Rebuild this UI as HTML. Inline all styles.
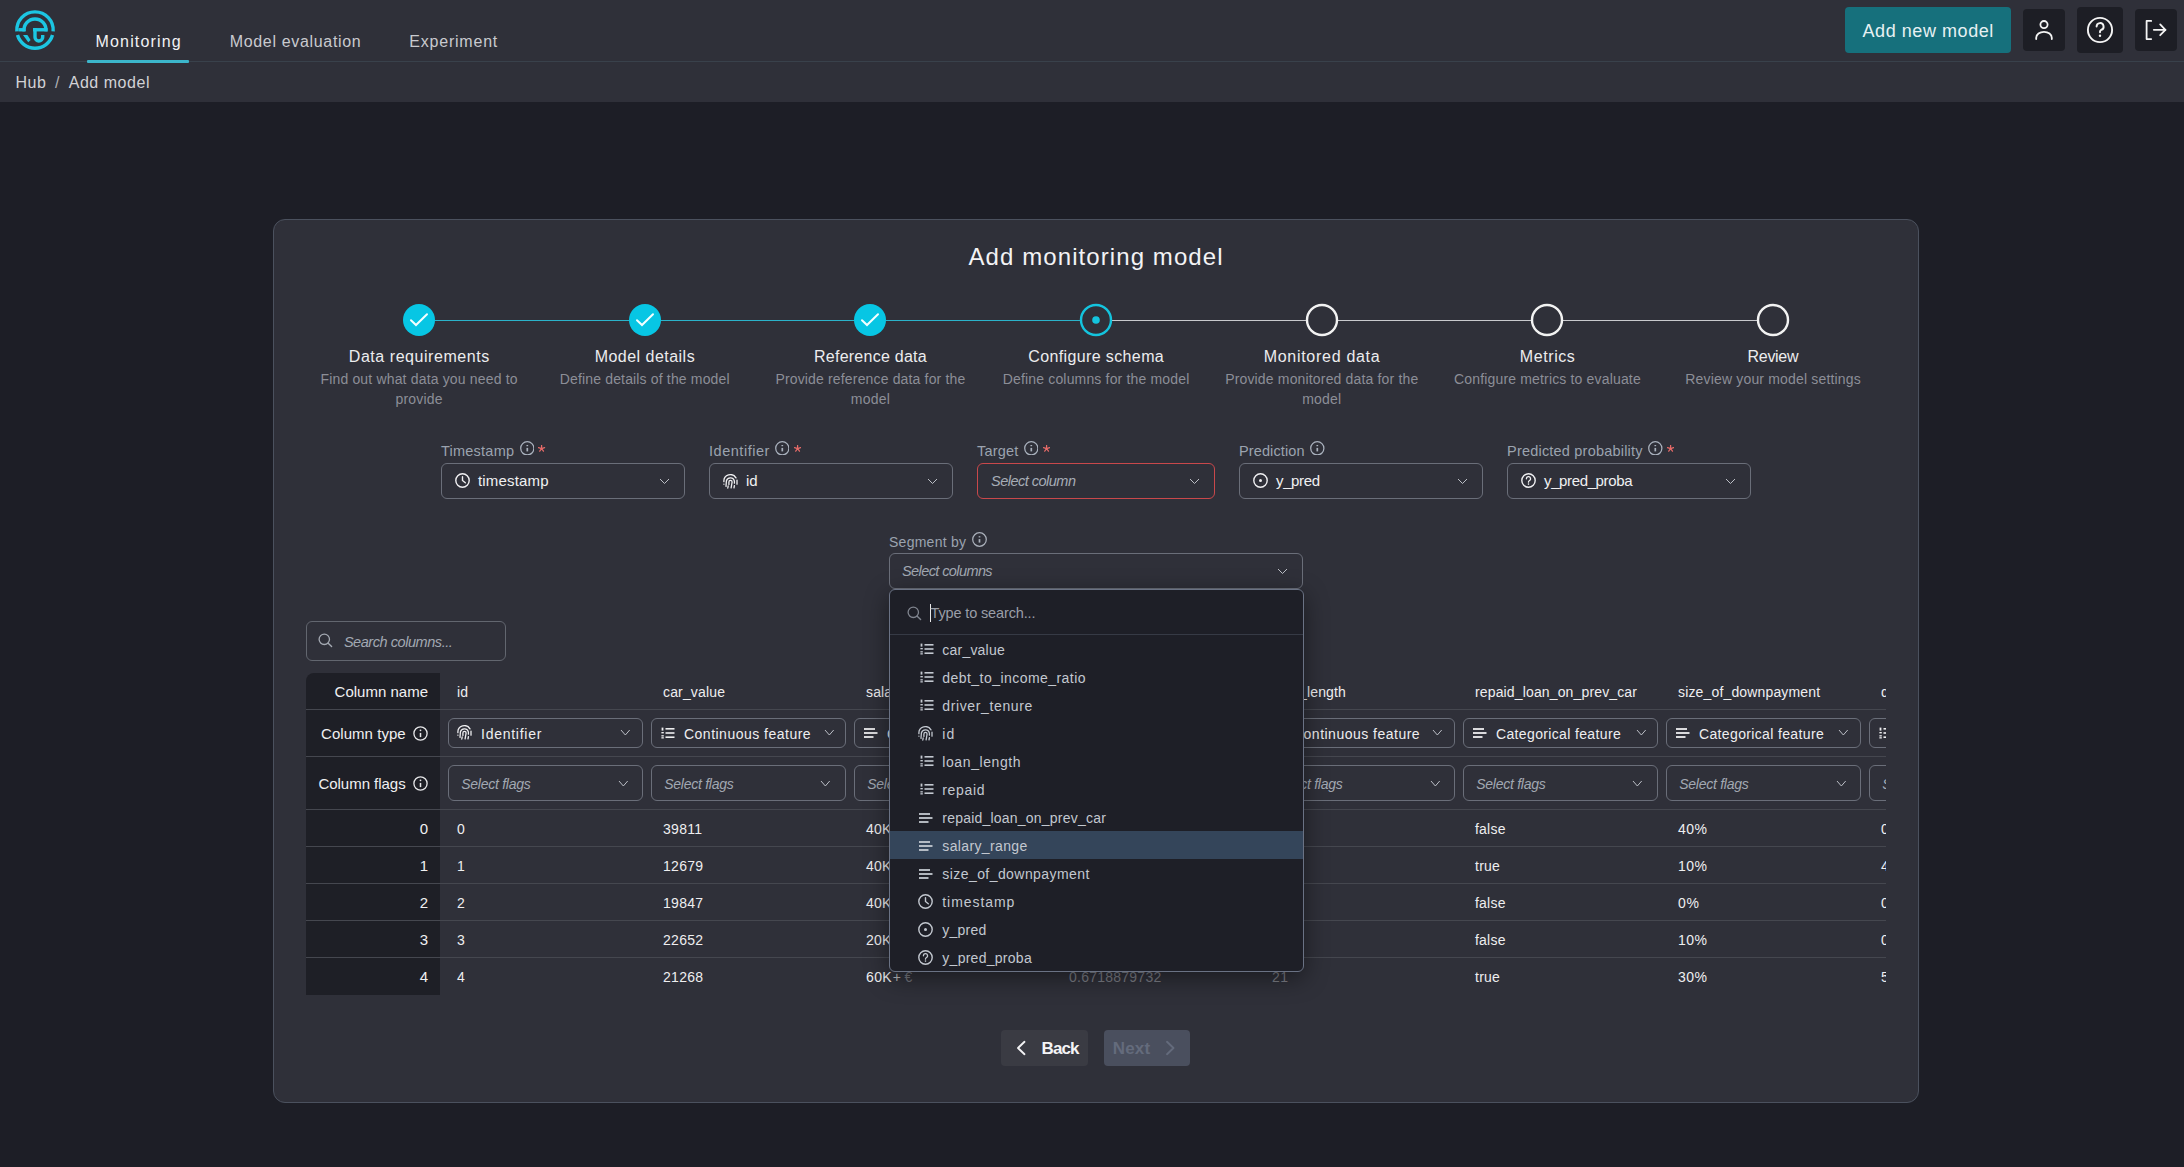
<!DOCTYPE html><html><head><meta charset="utf-8"><style>
html,body{margin:0;padding:0;}
body{width:2184px;height:1167px;overflow:hidden;background:#1d1e26;font-family:"Liberation Sans",sans-serif;position:relative;}
.t{position:absolute;white-space:nowrap;line-height:1;}
.b{position:absolute;box-sizing:border-box;}
</style></head><body>
<div class="b" style="left:0px;top:0px;width:2184px;height:102px;background:#2f3039;"></div>
<div class="b" style="left:0px;top:61px;width:2184px;height:1px;background:#39414b;"></div>
<div class="b" style="left:87px;top:60px;width:102px;height:3px;background:#3cb6cb;border-radius:1px;"></div>
<svg class="b" style="left:0px;top:0px;" width="80" height="60" viewBox="0 0 80 60" fill="none">
<g stroke="#1cc6e2" stroke-width="3.4" fill="none">
<path d="M16.85 31.4 A18.2 18.2 0 1 1 53.15 31.4"/>
<path d="M17.5 35 A18.2 18.2 0 0 0 52.5 35"/>
<path d="M24.09 31.4 A11 11 0 1 1 45.91 31.4"/>
<path d="M18.5 29.75 H25.5"/>
<path d="M33 29.75 H47.5"/>
<path d="M35 28.1 V37.2 A3.85 3.85 0 0 0 42.7 37.2 V35"/>
</g>
<path d="M23 35 L27.4 35 L30.6 40 L28.3 42.2 Z" fill="#1cc6e2"/></svg>
<div class="t" style="left:95.60px;top:34.45px;font-size:16px;color:#f2f2f4;letter-spacing:1.144px;">Monitoring</div>
<div class="t" style="left:229.70px;top:34.45px;font-size:16px;color:#c9cacf;letter-spacing:0.669px;">Model evaluation</div>
<div class="t" style="left:409.30px;top:34.45px;font-size:16px;color:#c9cacf;letter-spacing:0.786px;">Experiment</div>
<div class="b" style="left:1845px;top:7px;width:166px;height:46px;background:#16707c;border-radius:4px;"></div>
<div class="t" style="left:1862.50px;top:21.76px;font-size:18px;color:#e6f1f3;letter-spacing:0.560px;">Add new model</div>
<div class="b" style="left:2023px;top:9px;width:42px;height:42px;background:#1d1e25;border-radius:4px;"></div>
<div class="b" style="left:2077px;top:7px;width:46px;height:46px;background:#1d1e25;border-radius:4px;"></div>
<div class="b" style="left:2135px;top:9px;width:42px;height:42px;background:#1d1e25;border-radius:4px;"></div>
<svg class="b" style="left:2032px;top:18px;" width="24" height="24" viewBox="0 0 24 24" fill="none"><g stroke="#f4f4f4" stroke-width="1.8" stroke-linecap="round"><circle cx="12" cy="6.6" r="3.6"/><path d="M4.2 21 V19.8 A7.8 6 0 0 1 19.8 19.8 V21"/></g></svg>
<svg class="b" style="left:2084px;top:14px;" width="32" height="32" viewBox="0 0 32 32" fill="none"><g stroke="#f4f4f4" stroke-width="1.9" stroke-linecap="round"><circle cx="16" cy="16" r="12.1"/><path d="M12.6 12.6 A3.5 3.5 0 1 1 17.2 15.9 C16.5 16.3 16 16.9 16 17.8 V18.3"/></g><circle cx="16" cy="21.8" r="1.2" fill="#f4f4f4"/></svg>
<svg class="b" style="left:2142px;top:16px;" width="28" height="28" viewBox="0 0 28 28" fill="none"><g stroke="#f4f4f4" stroke-width="1.8" stroke-linecap="round" stroke-linejoin="round"><path d="M9.2 4.9 H4.6 V23.1 H9.2"/><path d="M11.8 13.8 H23.4"/><path d="M18.2 8.4 L23.4 13.8 L18.2 19.2"/></g></svg>
<div class="t" style="left:15.60px;top:75.05px;font-size:16px;color:#d2d2d6;letter-spacing:0.424px;">Hub</div>
<div class="t" style="left:55.00px;top:75.05px;font-size:16px;color:#b0b0b6;">/</div>
<div class="t" style="left:68.70px;top:75.05px;font-size:16px;color:#d2d2d6;letter-spacing:0.538px;">Add model</div>
<div class="b" style="left:273px;top:219px;width:1646px;height:884px;background:#2f3039;border:1px solid #4b515e;border-radius:12px;"></div>
<div class="t" style="left:968.50px;top:245.48px;font-size:24px;color:#f3f3f5;letter-spacing:1.081px;">Add monitoring model</div>
<div class="b" style="left:419px;top:319.5px;width:226px;height:1.5px;background:#2bb3ca;"></div>
<div class="b" style="left:645px;top:319.5px;width:225px;height:1.5px;background:#2bb3ca;"></div>
<div class="b" style="left:870px;top:319.5px;width:226px;height:1.5px;background:#2bb3ca;"></div>
<div class="b" style="left:1096px;top:319.5px;width:226px;height:1.5px;background:#c9c9cd;"></div>
<div class="b" style="left:1322px;top:319.5px;width:225px;height:1.5px;background:#c9c9cd;"></div>
<div class="b" style="left:1547px;top:319.5px;width:226px;height:1.5px;background:#c9c9cd;"></div>
<svg class="b" style="left:402px;top:303px;" width="34" height="34" viewBox="0 0 34 34" fill="none"><circle cx="17" cy="17" r="16" fill="#07c6e4"/><path d="M9 17.2 L14 22 L25 11.2" stroke="#f4ffff" stroke-width="2" fill="none" stroke-linecap="round"/></svg>
<svg class="b" style="left:628px;top:303px;" width="34" height="34" viewBox="0 0 34 34" fill="none"><circle cx="17" cy="17" r="16" fill="#07c6e4"/><path d="M9 17.2 L14 22 L25 11.2" stroke="#f4ffff" stroke-width="2" fill="none" stroke-linecap="round"/></svg>
<svg class="b" style="left:853px;top:303px;" width="34" height="34" viewBox="0 0 34 34" fill="none"><circle cx="17" cy="17" r="16" fill="#07c6e4"/><path d="M9 17.2 L14 22 L25 11.2" stroke="#f4ffff" stroke-width="2" fill="none" stroke-linecap="round"/></svg>
<svg class="b" style="left:1079px;top:303px;" width="34" height="34" viewBox="0 0 34 34" fill="none"><circle cx="17" cy="17" r="15" fill="#2f3039" stroke="#14c4de" stroke-width="2.4"/><circle cx="17" cy="17" r="3.8" fill="#14c4de"/></svg>
<svg class="b" style="left:1305px;top:303px;" width="34" height="34" viewBox="0 0 34 34" fill="none"><circle cx="17" cy="17" r="15" fill="#2f3039" stroke="#f2f2f2" stroke-width="2.4"/></svg>
<svg class="b" style="left:1530px;top:303px;" width="34" height="34" viewBox="0 0 34 34" fill="none"><circle cx="17" cy="17" r="15" fill="#2f3039" stroke="#f2f2f2" stroke-width="2.4"/></svg>
<svg class="b" style="left:1756px;top:303px;" width="34" height="34" viewBox="0 0 34 34" fill="none"><circle cx="17" cy="17" r="15" fill="#2f3039" stroke="#f2f2f2" stroke-width="2.4"/></svg>
<div class="t" style="left:348.80px;top:349.45px;font-size:16px;color:#ececee;letter-spacing:0.549px;">Data requirements</div>
<div class="t" style="left:320.47px;top:372.15px;font-size:14px;color:#8c8e97;letter-spacing:0.166px;">Find out what data you need to</div>
<div class="t" style="left:395.47px;top:392.15px;font-size:14px;color:#8c8e97;letter-spacing:0.191px;">provide</div>
<div class="t" style="left:594.67px;top:349.45px;font-size:16px;color:#ececee;letter-spacing:0.477px;">Model details</div>
<div class="t" style="left:559.72px;top:372.15px;font-size:14px;color:#8c8e97;letter-spacing:0.159px;">Define details of the model</div>
<div class="t" style="left:813.99px;top:349.45px;font-size:16px;color:#ececee;letter-spacing:0.253px;">Reference data</div>
<div class="t" style="left:775.41px;top:372.15px;font-size:14px;color:#8c8e97;letter-spacing:0.160px;">Provide reference data for the</div>
<div class="t" style="left:850.80px;top:392.15px;font-size:14px;color:#8c8e97;letter-spacing:0.238px;">model</div>
<div class="t" style="left:1028.26px;top:349.45px;font-size:16px;color:#ececee;letter-spacing:0.377px;">Configure schema</div>
<div class="t" style="left:1002.69px;top:372.15px;font-size:14px;color:#8c8e97;letter-spacing:0.169px;">Define columns for the model</div>
<div class="t" style="left:1263.68px;top:349.45px;font-size:16px;color:#ececee;letter-spacing:0.713px;">Monitored data</div>
<div class="t" style="left:1225.16px;top:372.15px;font-size:14px;color:#8c8e97;letter-spacing:0.162px;">Provide monitored data for the</div>
<div class="t" style="left:1302.14px;top:392.15px;font-size:14px;color:#8c8e97;letter-spacing:0.238px;">model</div>
<div class="t" style="left:1519.85px;top:349.45px;font-size:16px;color:#ececee;letter-spacing:0.574px;">Metrics</div>
<div class="t" style="left:1454.03px;top:372.15px;font-size:14px;color:#8c8e97;letter-spacing:0.163px;">Configure metrics to evaluate</div>
<div class="t" style="left:1747.52px;top:349.45px;font-size:16px;color:#ececee;letter-spacing:-0.292px;">Review</div>
<div class="t" style="left:1685.29px;top:372.15px;font-size:14px;color:#8c8e97;letter-spacing:0.171px;">Review your model settings</div>
<div class="t" style="left:441.00px;top:443.52px;font-size:14.5px;color:#9ba3af;letter-spacing:0.229px;">Timestamp</div>
<svg class="b" style="left:519.5px;top:440.6px;" width="14.6" height="14.6" viewBox="0 0 14.6 14.6" fill="none"><circle cx="7.3" cy="7.3" r="6.6" stroke="#aab2be" stroke-width="1.25"/><path d="M7.3 6.8999999999999995 V10.4" stroke="#aab2be" stroke-width="1.7"/><path d="M7.3 5.199999999999999 V4.0" stroke="#aab2be" stroke-width="1.7"/></svg>
<svg class="b" style="left:538.4px;top:445.1px;" width="7.2" height="7.2" viewBox="0 0 7.2 7.2" fill="none"><path d="M3.6 3.6 L3.60 0.40 M3.6 3.6 L6.64 2.61 M3.6 3.6 L5.48 6.19 M3.6 3.6 L1.72 6.19 M3.6 3.6 L0.56 2.61 " stroke="#e56a68" stroke-width="1.25" stroke-linecap="round"/></svg>
<div class="b" style="left:441px;top:463px;width:244px;height:36px;border:1px solid #6a6e79;border-radius:6px;"></div>
<svg class="b" style="left:455px;top:473px;" width="15" height="15" viewBox="0 0 15 15" fill="none"><circle cx="7.5" cy="7.5" r="6.7" stroke="#f0f0f2" stroke-width="1.4"/><path d="M7.5 3.7 V7.5 L10.3 9.7" stroke="#f0f0f2" stroke-width="1.4" stroke-linecap="round" fill="none"/></svg>
<div class="t" style="left:478.00px;top:473.30px;font-size:15px;color:#f0f0f2;letter-spacing:0.177px;">timestamp</div>
<svg class="b" style="left:659px;top:478px;" width="11" height="6.5" viewBox="0 0 11 6.5" fill="none"><path d="M1 1 L5.5 5.5 L10 1" stroke="#c4c7ce" stroke-width="0.95" fill="none"/></svg>
<div class="t" style="left:709.00px;top:443.52px;font-size:14.5px;color:#9ba3af;letter-spacing:0.532px;">Identifier</div>
<svg class="b" style="left:774.9px;top:440.6px;" width="14.6" height="14.6" viewBox="0 0 14.6 14.6" fill="none"><circle cx="7.3" cy="7.3" r="6.6" stroke="#aab2be" stroke-width="1.25"/><path d="M7.3 6.8999999999999995 V10.4" stroke="#aab2be" stroke-width="1.7"/><path d="M7.3 5.199999999999999 V4.0" stroke="#aab2be" stroke-width="1.7"/></svg>
<svg class="b" style="left:793.8px;top:445.1px;" width="7.2" height="7.2" viewBox="0 0 7.2 7.2" fill="none"><path d="M3.6 3.6 L3.60 0.40 M3.6 3.6 L6.64 2.61 M3.6 3.6 L5.48 6.19 M3.6 3.6 L1.72 6.19 M3.6 3.6 L0.56 2.61 " stroke="#e56a68" stroke-width="1.25" stroke-linecap="round"/></svg>
<div class="b" style="left:709px;top:463px;width:244px;height:36px;border:1px solid #6a6e79;border-radius:6px;"></div>
<svg class="b" style="left:722.5px;top:473.5px;" width="15" height="15" viewBox="0 0 15 15" fill="none"><g stroke="#f0f0f2" stroke-width="1.3" fill="none" stroke-linecap="round">
<path d="M0.9 7.6 A6.5 6.5 0 0 1 13 3.9"/><path d="M0.9 10.1 V10.2"/><path d="M14 6.1 V10.2"/>
<path d="M3 12.4 L3.4 6.9 A4.1 4.1 0 0 1 11.4 7.2 V9.2"/><path d="M5.9 10.4 V8 A1.6 1.6 0 0 1 9.1 8 L8.1 13.9"/>
<path d="M5.2 11.8 L4.8 14"/><path d="M11.4 11.7 L11 13.9"/></g></svg>
<div class="t" style="left:746.00px;top:473.30px;font-size:15px;color:#f0f0f2;letter-spacing:-0.175px;">id</div>
<svg class="b" style="left:927px;top:478px;" width="11" height="6.5" viewBox="0 0 11 6.5" fill="none"><path d="M1 1 L5.5 5.5 L10 1" stroke="#c4c7ce" stroke-width="0.95" fill="none"/></svg>
<div class="t" style="left:977.00px;top:443.52px;font-size:14.5px;color:#9ba3af;letter-spacing:0.200px;">Target</div>
<svg class="b" style="left:1023.8px;top:440.6px;" width="14.6" height="14.6" viewBox="0 0 14.6 14.6" fill="none"><circle cx="7.3" cy="7.3" r="6.6" stroke="#aab2be" stroke-width="1.25"/><path d="M7.3 6.8999999999999995 V10.4" stroke="#aab2be" stroke-width="1.7"/><path d="M7.3 5.199999999999999 V4.0" stroke="#aab2be" stroke-width="1.7"/></svg>
<svg class="b" style="left:1042.7px;top:445.1px;" width="7.2" height="7.2" viewBox="0 0 7.2 7.2" fill="none"><path d="M3.6 3.6 L3.60 0.40 M3.6 3.6 L6.64 2.61 M3.6 3.6 L5.48 6.19 M3.6 3.6 L1.72 6.19 M3.6 3.6 L0.56 2.61 " stroke="#e56a68" stroke-width="1.25" stroke-linecap="round"/></svg>
<div class="b" style="left:977px;top:463px;width:238px;height:36px;border:1px solid #c9484b;border-radius:6px;"></div>
<div class="t" style="left:991.00px;top:474.02px;font-size:14.5px;color:#a6acb6;letter-spacing:-0.506px;font-style:italic;">Select column</div>
<svg class="b" style="left:1189px;top:478px;" width="11" height="6.5" viewBox="0 0 11 6.5" fill="none"><path d="M1 1 L5.5 5.5 L10 1" stroke="#c4c7ce" stroke-width="0.95" fill="none"/></svg>
<div class="t" style="left:1239.00px;top:443.52px;font-size:14.5px;color:#9ba3af;letter-spacing:0.114px;">Prediction</div>
<svg class="b" style="left:1310.0px;top:440.6px;" width="14.6" height="14.6" viewBox="0 0 14.6 14.6" fill="none"><circle cx="7.3" cy="7.3" r="6.6" stroke="#aab2be" stroke-width="1.25"/><path d="M7.3 6.8999999999999995 V10.4" stroke="#aab2be" stroke-width="1.7"/><path d="M7.3 5.199999999999999 V4.0" stroke="#aab2be" stroke-width="1.7"/></svg>
<div class="b" style="left:1239px;top:463px;width:244px;height:36px;border:1px solid #6a6e79;border-radius:6px;"></div>
<svg class="b" style="left:1253px;top:473px;" width="15" height="15" viewBox="0 0 15 15" fill="none"><circle cx="7.5" cy="7.5" r="6.7" stroke="#f0f0f2" stroke-width="1.4"/><circle cx="7.5" cy="7.5" r="1.5" fill="#f0f0f2"/></svg>
<div class="t" style="left:1276.00px;top:473.30px;font-size:15px;color:#f0f0f2;letter-spacing:-0.373px;">y_pred</div>
<svg class="b" style="left:1457px;top:478px;" width="11" height="6.5" viewBox="0 0 11 6.5" fill="none"><path d="M1 1 L5.5 5.5 L10 1" stroke="#c4c7ce" stroke-width="0.95" fill="none"/></svg>
<div class="t" style="left:1507.00px;top:443.52px;font-size:14.5px;color:#9ba3af;letter-spacing:0.206px;">Predicted probability</div>
<svg class="b" style="left:1648.0px;top:440.6px;" width="14.6" height="14.6" viewBox="0 0 14.6 14.6" fill="none"><circle cx="7.3" cy="7.3" r="6.6" stroke="#aab2be" stroke-width="1.25"/><path d="M7.3 6.8999999999999995 V10.4" stroke="#aab2be" stroke-width="1.7"/><path d="M7.3 5.199999999999999 V4.0" stroke="#aab2be" stroke-width="1.7"/></svg>
<svg class="b" style="left:1666.9px;top:445.1px;" width="7.2" height="7.2" viewBox="0 0 7.2 7.2" fill="none"><path d="M3.6 3.6 L3.60 0.40 M3.6 3.6 L6.64 2.61 M3.6 3.6 L5.48 6.19 M3.6 3.6 L1.72 6.19 M3.6 3.6 L0.56 2.61 " stroke="#e56a68" stroke-width="1.25" stroke-linecap="round"/></svg>
<div class="b" style="left:1507px;top:463px;width:244px;height:36px;border:1px solid #6a6e79;border-radius:6px;"></div>
<svg class="b" style="left:1521px;top:473px;" width="15" height="15" viewBox="0 0 15 15" fill="none"><circle cx="7.5" cy="7.5" r="6.7" stroke="#f0f0f2" stroke-width="1.4"/><path d="M5.4 5.8 A2.1 2.1 0 1 1 8.3 7.7 C7.8 8 7.5 8.3 7.5 8.9 V9.2" stroke="#f0f0f2" stroke-width="1.3" fill="none" stroke-linecap="round"/><circle cx="7.5" cy="11.1" r="0.8" fill="#f0f0f2"/></svg>
<div class="t" style="left:1544.00px;top:473.30px;font-size:15px;color:#f0f0f2;letter-spacing:-0.370px;">y_pred_proba</div>
<svg class="b" style="left:1725px;top:478px;" width="11" height="6.5" viewBox="0 0 11 6.5" fill="none"><path d="M1 1 L5.5 5.5 L10 1" stroke="#c4c7ce" stroke-width="0.95" fill="none"/></svg>
<div class="b" style="left:306px;top:621px;width:200px;height:40px;border:1px solid #62666f;border-radius:6px;"></div>
<svg class="b" style="left:318px;top:633px;" width="16" height="16" viewBox="0 0 16 16" fill="none"><circle cx="6.3" cy="6.3" r="5.2" stroke="#a4a9b2" stroke-width="1.3"/><path d="M10.2 10.2 L13.6 13.6" stroke="#a4a9b2" stroke-width="1.4" stroke-linecap="round"/></svg>
<div class="t" style="left:343.90px;top:635.02px;font-size:14.5px;color:#a2a8b2;letter-spacing:-0.441px;font-style:italic;">Search columns...</div>
<div class="b" style="left:306px;top:673px;width:1580px;height:322px;overflow:hidden;">
<div class="b" style="left:0px;top:0px;width:134px;height:322px;background:#1e1f26;border-top-left-radius:8px;"></div>
<div class="b" style="left:0px;top:36px;width:1580px;height:1px;background:#45474f;"></div>
<div class="b" style="left:0px;top:83px;width:1580px;height:1px;background:#45474f;"></div>
<div class="b" style="left:0px;top:136px;width:1580px;height:1px;background:#45474f;"></div>
<div class="b" style="left:0px;top:173px;width:1580px;height:1px;background:#45474f;"></div>
<div class="b" style="left:0px;top:210px;width:1580px;height:1px;background:#45474f;"></div>
<div class="b" style="left:0px;top:247px;width:1580px;height:1px;background:#45474f;"></div>
<div class="b" style="left:0px;top:284px;width:1580px;height:1px;background:#45474f;"></div>
<div class="t" style="left:28.60px;top:10.70px;font-size:15px;color:#f0f0f2;letter-spacing:0.002px;">Column name</div>
<div class="t" style="left:15.00px;top:53.30px;font-size:15px;color:#f0f0f2;letter-spacing:0.049px;">Column type</div>
<div class="t" style="left:12.40px;top:102.50px;font-size:15px;color:#f0f0f2;letter-spacing:-0.022px;">Column flags</div>
<div class="t" style="left:113.66px;top:148.30px;font-size:15px;color:#f0f0f2;">0</div>
<div class="t" style="left:113.66px;top:185.30px;font-size:15px;color:#f0f0f2;">1</div>
<div class="t" style="left:113.66px;top:222.30px;font-size:15px;color:#f0f0f2;">2</div>
<div class="t" style="left:113.66px;top:259.30px;font-size:15px;color:#f0f0f2;">3</div>
<div class="t" style="left:113.66px;top:296.30px;font-size:15px;color:#f0f0f2;">4</div>
<svg class="b" style="left:107px;top:53px;" width="15" height="15" viewBox="0 0 15 15" fill="none"><circle cx="7.5" cy="7.5" r="6.6" stroke="#e8e8ea" stroke-width="1.3"/><path d="M7.5 6.9 V11.1" stroke="#e8e8ea" stroke-width="1.5"/><circle cx="7.5" cy="4.3" r="0.9" fill="#e8e8ea"/></svg>
<svg class="b" style="left:107px;top:103px;" width="15" height="15" viewBox="0 0 15 15" fill="none"><circle cx="7.5" cy="7.5" r="6.6" stroke="#e8e8ea" stroke-width="1.3"/><path d="M7.5 6.9 V11.1" stroke="#e8e8ea" stroke-width="1.5"/><circle cx="7.5" cy="4.3" r="0.9" fill="#e8e8ea"/></svg>
<div class="t" style="left:151.00px;top:11.75px;font-size:14px;color:#eeeef0;letter-spacing:0.218px;">id</div>
<div class="b" style="left:142px;top:45px;width:194.5px;height:30px;border:1px solid #6a6e79;border-radius:6px;"></div>
<svg class="b" style="left:151px;top:52px;" width="15" height="15" viewBox="0 0 15 15" fill="none"><g stroke="#eeeef0" stroke-width="1.3" fill="none" stroke-linecap="round">
<path d="M0.9 7.6 A6.5 6.5 0 0 1 13 3.9"/><path d="M0.9 10.1 V10.2"/><path d="M14 6.1 V10.2"/>
<path d="M3 12.4 L3.4 6.9 A4.1 4.1 0 0 1 11.4 7.2 V9.2"/><path d="M5.9 10.4 V8 A1.6 1.6 0 0 1 9.1 8 L8.1 13.9"/>
<path d="M5.2 11.8 L4.8 14"/><path d="M11.4 11.7 L11 13.9"/></g></svg>
<div class="t" style="left:175.00px;top:53.85px;font-size:14px;color:#eeeef0;letter-spacing:0.745px;">Identifier</div>
<svg class="b" style="left:314px;top:56px;" width="10.7" height="7" viewBox="0 0 10.7 7" fill="none"><path d="M1 1 L5.35 6 L9.7 1" stroke="#c4c7ce" stroke-width="0.95" fill="none"/></svg>
<div class="b" style="left:142px;top:92px;width:194.5px;height:36px;border:1px solid #6a6e79;border-radius:6px;"></div>
<div class="t" style="left:155.20px;top:104.15px;font-size:14px;color:#a2a8b2;letter-spacing:-0.261px;font-style:italic;">Select flags</div>
<svg class="b" style="left:312px;top:107px;" width="10.7" height="7" viewBox="0 0 10.7 7" fill="none"><path d="M1 1 L5.35 6 L9.7 1" stroke="#c4c7ce" stroke-width="0.95" fill="none"/></svg>
<div class="t" style="left:151.00px;top:149.15px;font-size:14px;color:#eeeef0;">0</div>
<div class="t" style="left:151.00px;top:186.15px;font-size:14px;color:#eeeef0;">1</div>
<div class="t" style="left:151.00px;top:223.15px;font-size:14px;color:#eeeef0;">2</div>
<div class="t" style="left:151.00px;top:260.15px;font-size:14px;color:#eeeef0;">3</div>
<div class="t" style="left:151.00px;top:297.15px;font-size:14px;color:#eeeef0;">4</div>
<div class="t" style="left:357.00px;top:11.75px;font-size:14px;color:#eeeef0;letter-spacing:0.152px;">car_value</div>
<div class="b" style="left:345px;top:45px;width:194.5px;height:30px;border:1px solid #6a6e79;border-radius:6px;"></div>
<svg class="b" style="left:355px;top:54px;" width="14" height="12" viewBox="0 0 14 12" fill="none"><g fill="#eeeef0"><rect x="4.5" y="1" width="9" height="1.6"/><rect x="4.5" y="5.2" width="9" height="1.6"/><rect x="4.5" y="9.4" width="9" height="1.6"/><rect x="0.6" y="0.6" width="1.8" height="3"/><rect x="0.4" y="5" width="2.4" height="1.4"/><rect x="0.4" y="8.2" width="2.4" height="1.3"/><rect x="0.4" y="10.2" width="2.4" height="1.3"/></g></svg>
<div class="t" style="left:378.00px;top:53.85px;font-size:14px;color:#eeeef0;letter-spacing:0.488px;">Continuous feature</div>
<svg class="b" style="left:518px;top:56px;" width="10.7" height="7" viewBox="0 0 10.7 7" fill="none"><path d="M1 1 L5.35 6 L9.7 1" stroke="#c4c7ce" stroke-width="0.95" fill="none"/></svg>
<div class="b" style="left:345px;top:92px;width:194.5px;height:36px;border:1px solid #6a6e79;border-radius:6px;"></div>
<div class="t" style="left:358.20px;top:104.15px;font-size:14px;color:#a2a8b2;letter-spacing:-0.261px;font-style:italic;">Select flags</div>
<svg class="b" style="left:514px;top:107px;" width="10.7" height="7" viewBox="0 0 10.7 7" fill="none"><path d="M1 1 L5.35 6 L9.7 1" stroke="#c4c7ce" stroke-width="0.95" fill="none"/></svg>
<div class="t" style="left:357.00px;top:149.15px;font-size:14px;color:#eeeef0;letter-spacing:0.284px;">39811</div>
<div class="t" style="left:357.00px;top:186.15px;font-size:14px;color:#eeeef0;letter-spacing:0.292px;">12679</div>
<div class="t" style="left:357.00px;top:223.15px;font-size:14px;color:#eeeef0;letter-spacing:0.292px;">19847</div>
<div class="t" style="left:357.00px;top:260.15px;font-size:14px;color:#eeeef0;letter-spacing:0.292px;">22652</div>
<div class="t" style="left:357.00px;top:297.15px;font-size:14px;color:#eeeef0;letter-spacing:0.292px;">21268</div>
<div class="t" style="left:560.00px;top:11.75px;font-size:14px;color:#eeeef0;letter-spacing:0.147px;">salary_range</div>
<div class="b" style="left:548px;top:45px;width:194.5px;height:30px;border:1px solid #6a6e79;border-radius:6px;"></div>
<svg class="b" style="left:557px;top:54px;" width="15" height="12" viewBox="0 0 15 12" fill="none"><g fill="#eeeef0"><rect x="1" y="1.1" width="11" height="1.8"/><rect x="1" y="5.1" width="13.5" height="1.8"/><rect x="1" y="9.1" width="9.5" height="1.8"/></g></svg>
<div class="t" style="left:581.00px;top:53.85px;font-size:14px;color:#eeeef0;letter-spacing:0.356px;">Categorical feature</div>
<svg class="b" style="left:720px;top:56px;" width="10.7" height="7" viewBox="0 0 10.7 7" fill="none"><path d="M1 1 L5.35 6 L9.7 1" stroke="#c4c7ce" stroke-width="0.95" fill="none"/></svg>
<div class="b" style="left:548px;top:92px;width:194.5px;height:36px;border:1px solid #6a6e79;border-radius:6px;"></div>
<div class="t" style="left:561.20px;top:104.15px;font-size:14px;color:#a2a8b2;letter-spacing:-0.261px;font-style:italic;">Select flags</div>
<svg class="b" style="left:718px;top:107px;" width="10.7" height="7" viewBox="0 0 10.7 7" fill="none"><path d="M1 1 L5.35 6 L9.7 1" stroke="#c4c7ce" stroke-width="0.95" fill="none"/></svg>
<div class="t" style="left:560.00px;top:149.15px;font-size:14px;color:#eeeef0;letter-spacing:0.222px;">40K - 60K €</div>
<div class="t" style="left:560.00px;top:186.15px;font-size:14px;color:#eeeef0;letter-spacing:0.222px;">40K - 60K €</div>
<div class="t" style="left:560.00px;top:223.15px;font-size:14px;color:#eeeef0;letter-spacing:0.222px;">40K - 60K €</div>
<div class="t" style="left:560.00px;top:260.15px;font-size:14px;color:#eeeef0;letter-spacing:0.222px;">20K - 40K €</div>
<div class="t" style="left:560.00px;top:297.15px;font-size:14px;color:#eeeef0;letter-spacing:0.374px;">60K</div>
<div class="t" style="left:586.66px;top:297.15px;font-size:14px;color:#b8b9be;">+</div>
<div class="t" style="left:598.58px;top:297.15px;font-size:14px;color:#75777e;">€</div>
<div class="t" style="left:763.00px;top:11.75px;font-size:14px;color:#eeeef0;letter-spacing:0.142px;">debt_to_income_ratio</div>
<div class="b" style="left:751px;top:45px;width:194.5px;height:30px;border:1px solid #6a6e79;border-radius:6px;"></div>
<svg class="b" style="left:761px;top:54px;" width="14" height="12" viewBox="0 0 14 12" fill="none"><g fill="#eeeef0"><rect x="4.5" y="1" width="9" height="1.6"/><rect x="4.5" y="5.2" width="9" height="1.6"/><rect x="4.5" y="9.4" width="9" height="1.6"/><rect x="0.6" y="0.6" width="1.8" height="3"/><rect x="0.4" y="5" width="2.4" height="1.4"/><rect x="0.4" y="8.2" width="2.4" height="1.3"/><rect x="0.4" y="10.2" width="2.4" height="1.3"/></g></svg>
<div class="t" style="left:784.00px;top:53.85px;font-size:14px;color:#eeeef0;letter-spacing:0.488px;">Continuous feature</div>
<svg class="b" style="left:924px;top:56px;" width="10.7" height="7" viewBox="0 0 10.7 7" fill="none"><path d="M1 1 L5.35 6 L9.7 1" stroke="#c4c7ce" stroke-width="0.95" fill="none"/></svg>
<div class="b" style="left:751px;top:92px;width:194.5px;height:36px;border:1px solid #6a6e79;border-radius:6px;"></div>
<div class="t" style="left:764.20px;top:104.15px;font-size:14px;color:#a2a8b2;letter-spacing:-0.261px;font-style:italic;">Select flags</div>
<svg class="b" style="left:920px;top:107px;" width="10.7" height="7" viewBox="0 0 10.7 7" fill="none"><path d="M1 1 L5.35 6 L9.7 1" stroke="#c4c7ce" stroke-width="0.95" fill="none"/></svg>
<div class="t" style="left:763.00px;top:149.15px;font-size:14px;color:#eeeef0;letter-spacing:0.244px;">0.5471638122</div>
<div class="t" style="left:763.00px;top:186.15px;font-size:14px;color:#eeeef0;letter-spacing:0.244px;">0.2846275529</div>
<div class="t" style="left:763.00px;top:223.15px;font-size:14px;color:#eeeef0;letter-spacing:0.244px;">0.3308742918</div>
<div class="t" style="left:763.00px;top:260.15px;font-size:14px;color:#eeeef0;letter-spacing:0.244px;">0.4562981742</div>
<div class="t" style="left:763.00px;top:297.15px;font-size:14px;color:#7c7e86;letter-spacing:0.244px;">0.6718879732</div>
<div class="t" style="left:966.00px;top:11.75px;font-size:14px;color:#eeeef0;letter-spacing:0.145px;">loan_length</div>
<div class="b" style="left:954px;top:45px;width:194.5px;height:30px;border:1px solid #6a6e79;border-radius:6px;"></div>
<svg class="b" style="left:964px;top:54px;" width="14" height="12" viewBox="0 0 14 12" fill="none"><g fill="#eeeef0"><rect x="4.5" y="1" width="9" height="1.6"/><rect x="4.5" y="5.2" width="9" height="1.6"/><rect x="4.5" y="9.4" width="9" height="1.6"/><rect x="0.6" y="0.6" width="1.8" height="3"/><rect x="0.4" y="5" width="2.4" height="1.4"/><rect x="0.4" y="8.2" width="2.4" height="1.3"/><rect x="0.4" y="10.2" width="2.4" height="1.3"/></g></svg>
<div class="t" style="left:987.00px;top:53.85px;font-size:14px;color:#eeeef0;letter-spacing:0.488px;">Continuous feature</div>
<svg class="b" style="left:1126px;top:56px;" width="10.7" height="7" viewBox="0 0 10.7 7" fill="none"><path d="M1 1 L5.35 6 L9.7 1" stroke="#c4c7ce" stroke-width="0.95" fill="none"/></svg>
<div class="b" style="left:954px;top:92px;width:194.5px;height:36px;border:1px solid #6a6e79;border-radius:6px;"></div>
<div class="t" style="left:967.20px;top:104.15px;font-size:14px;color:#a2a8b2;letter-spacing:-0.261px;font-style:italic;">Select flags</div>
<svg class="b" style="left:1124px;top:107px;" width="10.7" height="7" viewBox="0 0 10.7 7" fill="none"><path d="M1 1 L5.35 6 L9.7 1" stroke="#c4c7ce" stroke-width="0.95" fill="none"/></svg>
<div class="t" style="left:966.00px;top:149.15px;font-size:14px;color:#eeeef0;letter-spacing:0.467px;">24</div>
<div class="t" style="left:966.00px;top:186.15px;font-size:14px;color:#eeeef0;letter-spacing:0.467px;">36</div>
<div class="t" style="left:966.00px;top:223.15px;font-size:14px;color:#eeeef0;letter-spacing:0.467px;">48</div>
<div class="t" style="left:966.00px;top:260.15px;font-size:14px;color:#eeeef0;letter-spacing:0.467px;">60</div>
<div class="t" style="left:966.00px;top:297.15px;font-size:14px;color:#7c7e86;letter-spacing:0.467px;">21</div>
<div class="t" style="left:1169.00px;top:11.75px;font-size:14px;color:#eeeef0;letter-spacing:0.144px;">repaid_loan_on_prev_car</div>
<div class="b" style="left:1157px;top:45px;width:194.5px;height:30px;border:1px solid #6a6e79;border-radius:6px;"></div>
<svg class="b" style="left:1166px;top:54px;" width="15" height="12" viewBox="0 0 15 12" fill="none"><g fill="#eeeef0"><rect x="1" y="1.1" width="11" height="1.8"/><rect x="1" y="5.1" width="13.5" height="1.8"/><rect x="1" y="9.1" width="9.5" height="1.8"/></g></svg>
<div class="t" style="left:1190.00px;top:53.85px;font-size:14px;color:#eeeef0;letter-spacing:0.356px;">Categorical feature</div>
<svg class="b" style="left:1330px;top:56px;" width="10.7" height="7" viewBox="0 0 10.7 7" fill="none"><path d="M1 1 L5.35 6 L9.7 1" stroke="#c4c7ce" stroke-width="0.95" fill="none"/></svg>
<div class="b" style="left:1157px;top:92px;width:194.5px;height:36px;border:1px solid #6a6e79;border-radius:6px;"></div>
<div class="t" style="left:1170.20px;top:104.15px;font-size:14px;color:#a2a8b2;letter-spacing:-0.261px;font-style:italic;">Select flags</div>
<svg class="b" style="left:1326px;top:107px;" width="10.7" height="7" viewBox="0 0 10.7 7" fill="none"><path d="M1 1 L5.35 6 L9.7 1" stroke="#c4c7ce" stroke-width="0.95" fill="none"/></svg>
<div class="t" style="left:1169.00px;top:149.15px;font-size:14px;color:#eeeef0;letter-spacing:0.222px;">false</div>
<div class="t" style="left:1169.00px;top:186.15px;font-size:14px;color:#eeeef0;letter-spacing:0.241px;">true</div>
<div class="t" style="left:1169.00px;top:223.15px;font-size:14px;color:#eeeef0;letter-spacing:0.222px;">false</div>
<div class="t" style="left:1169.00px;top:260.15px;font-size:14px;color:#eeeef0;letter-spacing:0.222px;">false</div>
<div class="t" style="left:1169.00px;top:297.15px;font-size:14px;color:#eeeef0;letter-spacing:0.241px;">true</div>
<div class="t" style="left:1372.00px;top:11.75px;font-size:14px;color:#eeeef0;letter-spacing:0.155px;">size_of_downpayment</div>
<div class="b" style="left:1360px;top:45px;width:194.5px;height:30px;border:1px solid #6a6e79;border-radius:6px;"></div>
<svg class="b" style="left:1369px;top:54px;" width="15" height="12" viewBox="0 0 15 12" fill="none"><g fill="#eeeef0"><rect x="1" y="1.1" width="11" height="1.8"/><rect x="1" y="5.1" width="13.5" height="1.8"/><rect x="1" y="9.1" width="9.5" height="1.8"/></g></svg>
<div class="t" style="left:1393.00px;top:53.85px;font-size:14px;color:#eeeef0;letter-spacing:0.356px;">Categorical feature</div>
<svg class="b" style="left:1532px;top:56px;" width="10.7" height="7" viewBox="0 0 10.7 7" fill="none"><path d="M1 1 L5.35 6 L9.7 1" stroke="#c4c7ce" stroke-width="0.95" fill="none"/></svg>
<div class="b" style="left:1360px;top:92px;width:194.5px;height:36px;border:1px solid #6a6e79;border-radius:6px;"></div>
<div class="t" style="left:1373.20px;top:104.15px;font-size:14px;color:#a2a8b2;letter-spacing:-0.261px;font-style:italic;">Select flags</div>
<svg class="b" style="left:1530px;top:107px;" width="10.7" height="7" viewBox="0 0 10.7 7" fill="none"><path d="M1 1 L5.35 6 L9.7 1" stroke="#c4c7ce" stroke-width="0.95" fill="none"/></svg>
<div class="t" style="left:1372.00px;top:149.15px;font-size:14px;color:#eeeef0;letter-spacing:0.420px;">40%</div>
<div class="t" style="left:1372.00px;top:186.15px;font-size:14px;color:#eeeef0;letter-spacing:0.420px;">10%</div>
<div class="t" style="left:1372.00px;top:223.15px;font-size:14px;color:#eeeef0;letter-spacing:0.607px;">0%</div>
<div class="t" style="left:1372.00px;top:260.15px;font-size:14px;color:#eeeef0;letter-spacing:0.420px;">10%</div>
<div class="t" style="left:1372.00px;top:297.15px;font-size:14px;color:#eeeef0;letter-spacing:0.420px;">30%</div>
<div class="t" style="left:1575.00px;top:11.75px;font-size:14px;color:#eeeef0;letter-spacing:0.137px;">driver_tenure</div>
<div class="b" style="left:1563px;top:45px;width:194.5px;height:30px;border:1px solid #6a6e79;border-radius:6px;"></div>
<svg class="b" style="left:1573px;top:54px;" width="14" height="12" viewBox="0 0 14 12" fill="none"><g fill="#eeeef0"><rect x="4.5" y="1" width="9" height="1.6"/><rect x="4.5" y="5.2" width="9" height="1.6"/><rect x="4.5" y="9.4" width="9" height="1.6"/><rect x="0.6" y="0.6" width="1.8" height="3"/><rect x="0.4" y="5" width="2.4" height="1.4"/><rect x="0.4" y="8.2" width="2.4" height="1.3"/><rect x="0.4" y="10.2" width="2.4" height="1.3"/></g></svg>
<div class="t" style="left:1596.00px;top:53.85px;font-size:14px;color:#eeeef0;letter-spacing:0.488px;">Continuous feature</div>
<svg class="b" style="left:1736px;top:56px;" width="10.7" height="7" viewBox="0 0 10.7 7" fill="none"><path d="M1 1 L5.35 6 L9.7 1" stroke="#c4c7ce" stroke-width="0.95" fill="none"/></svg>
<div class="b" style="left:1563px;top:92px;width:194.5px;height:36px;border:1px solid #6a6e79;border-radius:6px;"></div>
<div class="t" style="left:1576.20px;top:104.15px;font-size:14px;color:#a2a8b2;letter-spacing:-0.261px;font-style:italic;">Select flags</div>
<svg class="b" style="left:1732px;top:107px;" width="10.7" height="7" viewBox="0 0 10.7 7" fill="none"><path d="M1 1 L5.35 6 L9.7 1" stroke="#c4c7ce" stroke-width="0.95" fill="none"/></svg>
<div class="t" style="left:1575.00px;top:149.15px;font-size:14px;color:#eeeef0;">0</div>
<div class="t" style="left:1575.00px;top:186.15px;font-size:14px;color:#eeeef0;">4</div>
<div class="t" style="left:1575.00px;top:223.15px;font-size:14px;color:#eeeef0;">0</div>
<div class="t" style="left:1575.00px;top:260.15px;font-size:14px;color:#eeeef0;">0</div>
<div class="t" style="left:1575.00px;top:297.15px;font-size:14px;color:#eeeef0;">5</div>
</div>
<div class="t" style="left:889.00px;top:534.95px;font-size:14px;color:#9ba3af;letter-spacing:0.254px;">Segment by</div>
<svg class="b" style="left:972px;top:532px;" width="15" height="15" viewBox="0 0 15 15" fill="none"><circle cx="7.5" cy="7.5" r="6.8" stroke="#aab0ba" stroke-width="1.25"/><path d="M7.5 7.1 V10.6" stroke="#aab0ba" stroke-width="1.7"/><path d="M7.5 5.4 V4.2" stroke="#aab0ba" stroke-width="1.7"/></svg>
<div class="b" style="left:889px;top:553px;width:414px;height:36px;border:1px solid #6a6e79;border-radius:6px;"></div>
<div class="t" style="left:902.00px;top:564.42px;font-size:14.5px;color:#a2a8b2;letter-spacing:-0.594px;font-style:italic;">Select columns</div>
<svg class="b" style="left:1277px;top:568px;" width="11" height="6.5" viewBox="0 0 11 6.5" fill="none"><path d="M1 1 L5.5 5.5 L10 1" stroke="#c4c7ce" stroke-width="0.95" fill="none"/></svg>
<div class="b" style="left:889px;top:589px;width:415px;height:383px;background:#1e1f27;border:1px solid #6a7284;border-radius:6px;box-shadow:0 6px 24px rgba(0,0,0,0.45);"></div>
<svg class="b" style="left:906.5px;top:605.5px;" width="15" height="15" viewBox="0 0 15 15" fill="none"><circle cx="6.3" cy="6.3" r="5.2" stroke="#80858f" stroke-width="1.3"/><path d="M10.2 10.2 L13.6 13.6" stroke="#80858f" stroke-width="1.4" stroke-linecap="round"/></svg>
<div class="b" style="left:930px;top:604px;width:1px;height:18px;background:#e8e8ea;"></div>
<div class="t" style="left:930.50px;top:605.62px;font-size:14.5px;color:#9a9ea8;letter-spacing:-0.137px;">Type to search...</div>
<div class="b" style="left:890px;top:634px;width:413px;height:1px;background:#363a45;"></div>
<svg class="b" style="left:919.8px;top:643.2px;" width="14" height="12" viewBox="0 0 14 12" fill="none"><g fill="#c3c8d0"><rect x="4.5" y="1" width="9" height="1.6"/><rect x="4.5" y="5.2" width="9" height="1.6"/><rect x="4.5" y="9.4" width="9" height="1.6"/><rect x="0.6" y="0.6" width="1.8" height="3"/><rect x="0.4" y="5" width="2.4" height="1.4"/><rect x="0.4" y="8.2" width="2.4" height="1.3"/><rect x="0.4" y="10.2" width="2.4" height="1.3"/></g></svg>
<div class="t" style="left:942.30px;top:643.15px;font-size:14px;color:#c3c8d0;letter-spacing:0.212px;">car_value</div>
<svg class="b" style="left:919.8px;top:671.2px;" width="14" height="12" viewBox="0 0 14 12" fill="none"><g fill="#c3c8d0"><rect x="4.5" y="1" width="9" height="1.6"/><rect x="4.5" y="5.2" width="9" height="1.6"/><rect x="4.5" y="9.4" width="9" height="1.6"/><rect x="0.6" y="0.6" width="1.8" height="3"/><rect x="0.4" y="5" width="2.4" height="1.4"/><rect x="0.4" y="8.2" width="2.4" height="1.3"/><rect x="0.4" y="10.2" width="2.4" height="1.3"/></g></svg>
<div class="t" style="left:942.30px;top:671.15px;font-size:14px;color:#c3c8d0;letter-spacing:0.450px;">debt_to_income_ratio</div>
<svg class="b" style="left:919.8px;top:699.2px;" width="14" height="12" viewBox="0 0 14 12" fill="none"><g fill="#c3c8d0"><rect x="4.5" y="1" width="9" height="1.6"/><rect x="4.5" y="5.2" width="9" height="1.6"/><rect x="4.5" y="9.4" width="9" height="1.6"/><rect x="0.6" y="0.6" width="1.8" height="3"/><rect x="0.4" y="5" width="2.4" height="1.4"/><rect x="0.4" y="8.2" width="2.4" height="1.3"/><rect x="0.4" y="10.2" width="2.4" height="1.3"/></g></svg>
<div class="t" style="left:942.30px;top:699.15px;font-size:14px;color:#c3c8d0;letter-spacing:0.626px;">driver_tenure</div>
<svg class="b" style="left:918px;top:726px;" width="15" height="15" viewBox="0 0 15 15" fill="none"><g stroke="#c3c8d0" stroke-width="1.3" fill="none" stroke-linecap="round">
<path d="M0.9 7.6 A6.5 6.5 0 0 1 13 3.9"/><path d="M0.9 10.1 V10.2"/><path d="M14 6.1 V10.2"/>
<path d="M3 12.4 L3.4 6.9 A4.1 4.1 0 0 1 11.4 7.2 V9.2"/><path d="M5.9 10.4 V8 A1.6 1.6 0 0 1 9.1 8 L8.1 13.9"/>
<path d="M5.2 11.8 L4.8 14"/><path d="M11.4 11.7 L11 13.9"/></g></svg>
<div class="t" style="left:942.30px;top:727.15px;font-size:14px;color:#c3c8d0;letter-spacing:1.004px;">id</div>
<svg class="b" style="left:919.8px;top:755.2px;" width="14" height="12" viewBox="0 0 14 12" fill="none"><g fill="#c3c8d0"><rect x="4.5" y="1" width="9" height="1.6"/><rect x="4.5" y="5.2" width="9" height="1.6"/><rect x="4.5" y="9.4" width="9" height="1.6"/><rect x="0.6" y="0.6" width="1.8" height="3"/><rect x="0.4" y="5" width="2.4" height="1.4"/><rect x="0.4" y="8.2" width="2.4" height="1.3"/><rect x="0.4" y="10.2" width="2.4" height="1.3"/></g></svg>
<div class="t" style="left:942.30px;top:755.15px;font-size:14px;color:#c3c8d0;letter-spacing:0.590px;">loan_length</div>
<svg class="b" style="left:919.8px;top:783.2px;" width="14" height="12" viewBox="0 0 14 12" fill="none"><g fill="#c3c8d0"><rect x="4.5" y="1" width="9" height="1.6"/><rect x="4.5" y="5.2" width="9" height="1.6"/><rect x="4.5" y="9.4" width="9" height="1.6"/><rect x="0.6" y="0.6" width="1.8" height="3"/><rect x="0.4" y="5" width="2.4" height="1.4"/><rect x="0.4" y="8.2" width="2.4" height="1.3"/><rect x="0.4" y="10.2" width="2.4" height="1.3"/></g></svg>
<div class="t" style="left:942.30px;top:783.15px;font-size:14px;color:#c3c8d0;letter-spacing:0.657px;">repaid</div>
<svg class="b" style="left:918px;top:812px;" width="15" height="12" viewBox="0 0 15 12" fill="none"><g fill="#c3c8d0"><rect x="1" y="1.1" width="11" height="1.8"/><rect x="1" y="5.1" width="13.5" height="1.8"/><rect x="1" y="9.1" width="9.5" height="1.8"/></g></svg>
<div class="t" style="left:942.30px;top:811.15px;font-size:14px;color:#c3c8d0;letter-spacing:0.214px;">repaid_loan_on_prev_car</div>
<div class="b" style="left:890px;top:831px;width:413px;height:28px;background:#34455a;"></div>
<svg class="b" style="left:918px;top:840px;" width="15" height="12" viewBox="0 0 15 12" fill="none"><g fill="#c3c8d0"><rect x="1" y="1.1" width="11" height="1.8"/><rect x="1" y="5.1" width="13.5" height="1.8"/><rect x="1" y="9.1" width="9.5" height="1.8"/></g></svg>
<div class="t" style="left:942.30px;top:839.15px;font-size:14px;color:#c3c8d0;letter-spacing:0.369px;">salary_range</div>
<svg class="b" style="left:918px;top:868px;" width="15" height="12" viewBox="0 0 15 12" fill="none"><g fill="#c3c8d0"><rect x="1" y="1.1" width="11" height="1.8"/><rect x="1" y="5.1" width="13.5" height="1.8"/><rect x="1" y="9.1" width="9.5" height="1.8"/></g></svg>
<div class="t" style="left:942.30px;top:867.15px;font-size:14px;color:#c3c8d0;letter-spacing:0.433px;">size_of_downpayment</div>
<svg class="b" style="left:918px;top:894px;" width="15" height="15" viewBox="0 0 15 15" fill="none"><circle cx="7.5" cy="7.5" r="6.7" stroke="#c3c8d0" stroke-width="1.4"/><path d="M7.5 3.7 V7.5 L10.3 9.7" stroke="#c3c8d0" stroke-width="1.4" stroke-linecap="round" fill="none"/></svg>
<div class="t" style="left:942.30px;top:895.15px;font-size:14px;color:#c3c8d0;letter-spacing:0.928px;">timestamp</div>
<svg class="b" style="left:918px;top:922px;" width="15" height="15" viewBox="0 0 15 15" fill="none"><circle cx="7.5" cy="7.5" r="6.7" stroke="#c3c8d0" stroke-width="1.4"/><circle cx="7.5" cy="7.5" r="1.5" fill="#c3c8d0"/></svg>
<div class="t" style="left:942.30px;top:923.15px;font-size:14px;color:#c3c8d0;letter-spacing:0.239px;">y_pred</div>
<svg class="b" style="left:918px;top:950px;" width="15" height="15" viewBox="0 0 15 15" fill="none"><circle cx="7.5" cy="7.5" r="6.7" stroke="#c3c8d0" stroke-width="1.4"/><path d="M5.4 5.8 A2.1 2.1 0 1 1 8.3 7.7 C7.8 8 7.5 8.3 7.5 8.9 V9.2" stroke="#c3c8d0" stroke-width="1.3" fill="none" stroke-linecap="round"/><circle cx="7.5" cy="11.1" r="0.8" fill="#c3c8d0"/></svg>
<div class="t" style="left:942.30px;top:951.15px;font-size:14px;color:#c3c8d0;letter-spacing:0.273px;">y_pred_proba</div>
<div class="b" style="left:1001px;top:1030px;width:87px;height:36px;background:#3a3b43;border-radius:4px;"></div>
<svg class="b" style="left:1012px;top:1036px;" width="20" height="24" viewBox="0 0 20 24" fill="none"><path d="M12.5 5.8 L6 12 L12.5 18.2" stroke="#f2f2f4" stroke-width="1.9" fill="none" stroke-linecap="round" stroke-linejoin="round"/></svg>
<div class="t" style="left:1041.50px;top:1040.11px;font-size:17px;color:#f4f4f6;letter-spacing:-0.880px;font-weight:bold;">Back</div>
<div class="b" style="left:1104px;top:1030px;width:86px;height:36px;background:#4a4f5e;border-radius:4px;"></div>
<div class="t" style="left:1112.70px;top:1040.11px;font-size:17px;color:#646b7c;letter-spacing:0.218px;font-weight:bold;">Next</div>
<svg class="b" style="left:1160px;top:1036px;" width="20" height="24" viewBox="0 0 20 24" fill="none"><path d="M7 5.8 L13.5 12 L7 18.2" stroke="#646b7c" stroke-width="1.9" fill="none" stroke-linecap="round" stroke-linejoin="round"/></svg>
</body></html>
